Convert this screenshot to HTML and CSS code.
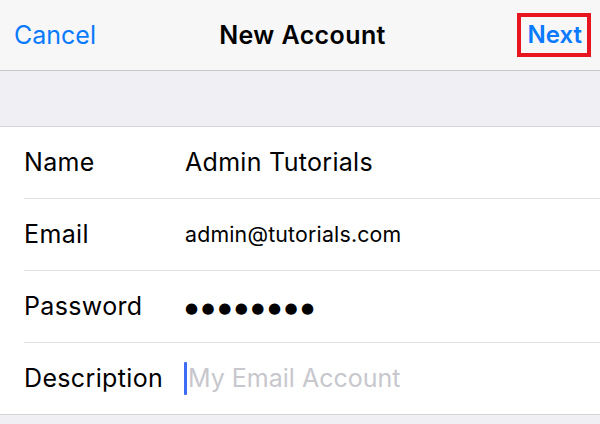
FILE: index.html
```html
<!DOCTYPE html>
<html lang="en">
<head>
<meta charset="utf-8">
<title>New Account</title>
<link rel="stylesheet" href="styles.css">
</head>
<body>
<div class="screen">
  <header class="navbar">
    <span class="nav-btn cancel">Cancel</span>
    <span class="nav-title">New Account</span>
    <span class="nav-right"><span class="nav-btn next">Next</span></span>
  </header>
  <div class="spacer"></div>
  <section class="form">
    <div class="row">
      <span class="label">Name</span>
      <span class="value">Admin Tutorials</span>
    </div>
    <div class="row">
      <span class="label">Email</span>
      <span class="value email">admin@tutorials.com</span>
    </div>
    <div class="row">
      <span class="label">Password</span>
      <span class="value dots">●●●●●●●●</span>
    </div>
    <div class="row last">
      <span class="label">Description</span>
      <span class="value placeholder"><span class="cursor"></span>My Email Account</span>
    </div>
  </section>
  <div class="footer"></div>
</div>
</body>
</html>
```

FILE: styles.css
```css
* { box-sizing: border-box; }
html, body {
  margin: 0;
  padding: 0;
  background: #efeff4;
}
body {
  font-family: Inter, "Liberation Sans", Arial, sans-serif;
  color: #000;
  width: 600px;
  height: 424px;
  overflow: hidden;
}
.screen {
  display: flex;
  flex-direction: column;
  height: 424px;
}
.navbar {
  height: 71px;
  flex: none;
  background: #f7f7f8;
  border-bottom: 1px solid #c6c6cb;
  display: grid;
  grid-template-columns: 1fr auto 1fr;
  align-items: center;
  padding: 0 9px 0 14px;
}
.nav-btn {
  font-size: 25px;
  color: #0a7afe;
  line-height: 1;
}
.cancel { justify-self: start; }
.nav-title {
  font-size: 25px;
  font-weight: 600;
  line-height: 1;
  letter-spacing: 0.4px;
}
.nav-right {
  justify-self: end;
  display: flex;
}
.next {
  font-weight: 600;
  font-size: 24px;
  border: 4px solid #e8141f;
  padding: 6px 5px 6px 7px;
  margin-top: -1px;
}
.spacer {
  height: 56px;
  flex: none;
  background: #efeff4;
  border-bottom: 1px solid #d3d3d8;
}
.form {
  background: #fff;
  padding-left: 24px;
  flex: none;
}
.row {
  height: 72px;
  display: grid;
  grid-template-columns: 161px 1fr;
  align-items: center;
  border-bottom: 1px solid #e1e1e3;
}
.row.last {
  border-bottom: none;
  height: 71px;
}
.label {
  font-size: 25px;
  line-height: 1;
  letter-spacing: 0.35px;
}
.value {
  font-size: 25px;
  line-height: 1;
  letter-spacing: 0.3px;
  display: flex;
  align-items: center;
}
.email {
  font-size: 21.3px;
  letter-spacing: 0.2px;
}
.dots {
  font-family: "DejaVu Sans", sans-serif;
  font-size: 15px;
  letter-spacing: 3.5px;
  padding-top: 4px;
}
.placeholder {
  color: #c7c7cd;
  margin-left: -1px;
  letter-spacing: 0;
}
.cursor {
  width: 3px;
  height: 33px;
  background: #3f6cf4;
  border-radius: 1px;
  margin-right: 1px;
}
.footer {
  flex: 1;
  background: #efeff4;
  border-top: 1px solid #d3d3d8;
}
```
